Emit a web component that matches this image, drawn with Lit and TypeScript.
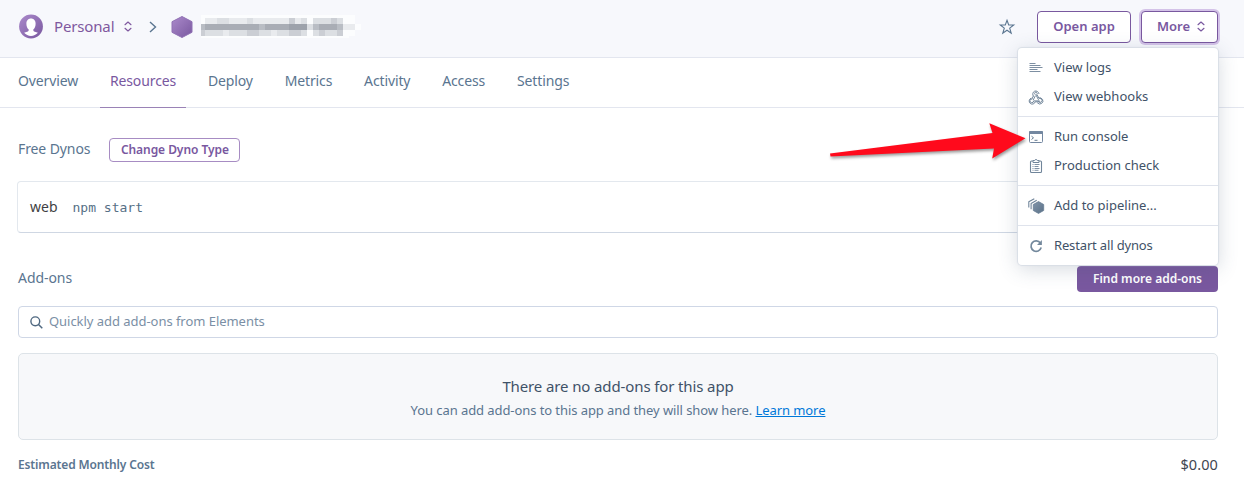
import { LitElement, html, css, svg } from "lit";
import { customElement } from "lit/decorators.js";

const TABS = ["Overview", "Resources", "Deploy", "Metrics", "Activity", "Access", "Settings"];

// Shades of the redacted application name, one string per row of mosaic cells.
const MOSAIC = [
  "111111111111111111111111110",
  "122332223222222423133343110",
  "566666666656666777356665221",
  "433323334433233443134334110",
  "111111111111111111111111100",
];
const ROW_TOPS = [0, 3, 9, 15, 21, 23];
const SHADES = ["none", "#fcfdfe", "#e9ebee", "#dcdfe3", "#cbced4", "#b9bdc4", "#a9adb5", "#9da2ab"];

const updown = svg`<path d="M1 3.700 4 1l3 2.700M1 7.300 4 10l3-2.700" fill="none" stroke="currentColor" stroke-width="1.150" stroke-linejoin="round" stroke-linecap="round"/>`;

const icons = {
  logs: svg`<path d="M1.500 3.500h6M1.500 5.500h11M1.500 7.500h13M1.500 9.500h8M1.500 11.500h11" stroke="#7d8fa2" fill="none"/>`,
  hooks: svg`<g fill="none" stroke="#6d8297" stroke-width=".95" stroke-linejoin="round" stroke-linecap="round"><path d="M5.300 7.100A3.200 3.200 0 1 1 11 4.600M5.300 7.100 3.900 9.900M7.200 7.100 5.300 10.800"/><path d="M6.800 5.200a1.300 1.300 0 1 1 2 .1l2 3.700a3.100 3.100 0 1 1-1.300 5M7.900 5.800l2.400 4.700a2 2 0 1 1 .2 2.200"/><path d="M2.900 9.200a3.100 3.100 0 1 0 4.300 3.600h4.300M3.900 9.900a1.900 1.900 0 1 0 1.800 2h5.500"/></g>`,
  console: svg`<path d="M2 2h12a1 1 0 0 1 1 1v2H1V3a1 1 0 0 1 1-1z" fill="#7387a0"/><rect x="1.500" y="2.500" width="13" height="11" rx="1" fill="none" stroke="#7387a0"/><path d="m3.500 7.200 2 1.600-2 1.700M6.500 11.300h3" fill="none" stroke="#647a90"/>`,
  check: svg`<rect x="2.500" y="3" width="11" height="11.500" rx="1" fill="none" stroke="#70859a" stroke-width="1.100"/><path d="M5 2.500h1.600a1.500 1.500 0 0 1 2.800 0H11v2H5z" fill="#fff" stroke="#70859a"/><path d="M4.500 6.500h1M4.500 8.500h1M4.500 10.500h1M4.500 12.300h1M6.500 6.500h5M6.500 8.500h4M6.500 10.500h5M6.500 12.300h4" stroke="#70859a" stroke-width=".9"/>`,
  pipeline: svg`<path d="m10.500 3.600 5.200 2.900v6l-5.200 2.900-5.200-2.900v-6z" fill="url(#slate)" stroke="#687e94" stroke-width=".8" stroke-linejoin="round"/><path d="M3.100 11.300V5.400l5.600-3.100M.8 9.500V3.800L6.300.8" fill="none" stroke="#70859a" stroke-width="1.100" stroke-linejoin="round"/><defs><linearGradient id="slate" x2="1" y2="1"><stop stop-color="#8295aa"/><stop offset="1" stop-color="#5b7188"/></linearGradient></defs>`,
  restart: svg`<path d="M12.400 5A5.200 5.200 0 1 0 13.200 9.600" fill="none" stroke="#73889c" stroke-width="1.700"/><path d="M13.900 2v5H9z" fill="#73889c"/>`,
};
type Icon = keyof typeof icons;

const MENU: { icon: Icon; label: string }[][] = [
  [
    { icon: "logs", label: "View logs" },
    { icon: "hooks", label: "View webhooks" },
  ],
  [
    { icon: "console", label: "Run console" },
    { icon: "check", label: "Production check" },
  ],
  [{ icon: "pipeline", label: "Add to pipeline..." }],
  [{ icon: "restart", label: "Restart all dynos" }],
];

@customElement("app-root")
export class AppRoot extends LitElement {
  static styles = css`
    :host { display: block; position: relative; height: 502px; overflow: hidden; background: #fff; color: #5a7590; font: 14px/20px "Noto Sans", "Open Sans", sans-serif; }
    * { box-sizing: border-box; }
    svg { display: block; flex: none; overflow: visible; }
    .header { height: 58px; padding: 0 26px 4px 19px; display: flex; align-items: center; background: #f7f8fc; border-bottom: 1px solid #e3e6ef; color: #7f589f; }
    .owner { width: 60px; margin: 0 10px 2px 11px; font-size: 15px; letter-spacing: -.15px; white-space: nowrap; }
    .chev { margin: 0 14px 0 17px; color: #5a7590; }
    .name { margin-left: 6px; }
    .star { margin-left: auto; margin-right: 22.500px; }
    .btn { height: 32px; padding-bottom: 2px; display: flex; align-items: center; justify-content: center; border: 1px solid #79589f; border-radius: 4px; background: #fff; color: #79589f; font-weight: 600; font-size: 13px; }
    .open { width: 94px; margin-right: 10px; }
    .more { width: 77px; padding-left: 3px; gap: 7px; box-shadow: 0 0 0 2px #d4c3e8; }
    .more svg { margin-top: 2px; }
    .tabs { height: 50px; padding: 0 8px; display: flex; gap: 11.75px; border-bottom: 1px solid #e3e6ef; letter-spacing: -.115px; }
    .tab { height: 50px; padding: 13px 10px 0; }
    .on { color: #79589f; border-bottom: 1px solid #9a82b6; }
    .main { padding: 30px 26px 0 18px; }
    .row { display: flex; align-items: center; }
    .free { padding-bottom: 2px; letter-spacing: -.1px; }
    .type { width: 131px; height: 24px; padding-bottom: 1px; margin-left: 19px; font-size: 12px; letter-spacing: -.06px; border-color: #a78cc3; }
    .dyno { height: 52px; margin: 19px 0 0 -1px; padding: 0 12px; display: flex; align-items: center; border: 1px solid #e3e8ee; border-bottom-color: #cfd7e3; border-radius: 4px; color: #3f3f44; }
    .cmd { margin-left: 15px; padding-top: 1px; font: 13px/20px "DejaVu Sans Mono", monospace; color: #567086; }
    .addons { height: 28px; margin-top: 32px; justify-content: space-between; }
    .addons span { padding-bottom: 2px; letter-spacing: -.06px; }
    .find { width: 141px; height: 26px; border-radius: 4px; background: #79589f; color: #fff; font-weight: 600; font-size: 12px; line-height: 26px; text-align: center; }
    .search { height: 32px; margin-top: 13px; padding: 0 11px; display: flex; align-items: center; gap: 6px; border: 1px solid #cfd7e6; border-radius: 4px; font-size: 13px; color: #7b8fa5; }
    .search span { padding-bottom: 2px; letter-spacing: -.04px; }
    .empty { height: 87px; margin-top: 15px; padding-top: 21px; background: #f7f8fa; border: 1px solid #dde3e8; border-radius: 5px; text-align: center; font-size: 13px; }
    .title { font-size: 15px; color: #3f5268; line-height: 22px; letter-spacing: -.12px; }
    .sub { margin-top: 3px; line-height: 20px; letter-spacing: -.075px; }
    .link { color: #0078d9; text-decoration: underline; }
    .cost { margin-top: 14px; justify-content: space-between; font-weight: 600; font-size: 12px; letter-spacing: -.14px; }
    .price { padding-bottom: 2px; margin-bottom: -1px; font-weight: 400; font-size: 14.500px; letter-spacing: .1px; color: #3f4650; }
    .menu { position: absolute; left: 1018px; top: 48px; width: 200px; height: 217px; background: #fff; border-radius: 4px; box-shadow: 0 0 1px 1px #d9dee6, 0 4px 20px rgba(60, 80, 110, .22); color: #3f5268; font-size: 13px; }
    .group { padding: 5px 0; border-bottom: 1px solid #dfe3ec; }
    .group:last-child { border: 0; letter-spacing: -.15px; }
    .item { height: 29px; padding-left: 10px; display: flex; align-items: center; gap: 10px; }
    .item span { padding-bottom: 2px; }
    .arrow { position: absolute; left: 820px; top: 110px; filter: drop-shadow(1px 2px 1.5px rgba(0, 0, 0, .4)); }
  `;

  render() {
    return html`
      <div class="header">
        <svg width="24" height="25" viewBox="0 0 25 25"><defs><linearGradient id="v" x2="1" y2="1"><stop stop-color="#ab8acb"/><stop offset="1" stop-color="#79589f"/></linearGradient></defs><circle cx="12.5" cy="12.5" r="12.4" fill="url(#v)"/><path d="M12.5 4.2c-3 0-4.8 2.3-4.8 5.4 0 2.600.8 4.700 2.400 6 .2 1.400-.4 2-1.600 2.400l-3.200 1.100c2 2.100 4.400 3.300 7.200 3.300s5.200-1.200 7.200-3.300l-3.200-1.100c-1.200-.4-1.800-1-1.600-2.400 1.600-1.300 2.400-3.400 2.400-6 0-3.100-1.800-5.400-4.800-5.400z" fill="#fff"/></svg>
        <span class="owner">Personal</span>
        <svg width="8" height="11" viewBox="0 0 8 11">${updown}</svg>
        <svg class="chev" width="8" height="12" viewBox="0 0 8 12"><path d="m1 1 5.500 5L1 11" fill="none" stroke="currentColor" stroke-width="1.400"/></svg>
        <svg width="22" height="24" viewBox="0 0 22 24"><path d="m11 1.500 10 5.200v10.600L11 22.500 1 17.300V6.700z" fill="url(#v)" stroke="#9070b4" stroke-width="1" stroke-linejoin="round"/></svg>
        <svg class="name" width="162" height="23" shape-rendering="crispEdges">${MOSAIC.map((r, y) => [...r].map((c, x) => svg`<rect x=${x ? x * 6 : 2} y=${ROW_TOPS[y]} width=${x ? 6 : 4} height=${ROW_TOPS[y + 1] - ROW_TOPS[y]} fill=${SHADES[+c]}/>`))}</svg>
        <svg class="star" width="16" height="16" viewBox="0 0 16 16"><path d="m8 1.300 1.700 4.700h5l-4 3.100 1.500 5L8 11.200l-4.200 2.900 1.500-5-4-3.100h5z" fill="none" stroke="#5a7590" stroke-width="1.100"/></svg>
        <div class="btn open">Open app</div>
        <div class="btn more">More <svg width="8" height="11" viewBox="0 0 8 11">${updown}</svg></div>
      </div>
      <div class="tabs">${TABS.map((t) => html`<div class="tab ${t === "Resources" ? "on" : ""}">${t}</div>`)}</div>
      <div class="main">
        <div class="row"><span class="free">Free Dynos</span><div class="btn type">Change Dyno Type</div></div>
        <div class="dyno"><span>web</span><span class="cmd">npm start</span></div>
        <div class="row addons"><span>Add-ons</span><div class="find">Find more add-ons</div></div>
        <div class="search"><svg width="13" height="13" viewBox="0 0 13 13"><circle cx="5.300" cy="5.300" r="4.400" fill="none" stroke="#4f6880" stroke-width="1.400"/><path d="m8.500 8.500 3.800 3.800" stroke="#4f6880" stroke-width="1.500"/></svg><span>Quickly add add-ons from Elements</span></div>
        <div class="empty">
          <div class="title">There are no add-ons for this app</div>
          <div class="sub">You can add add-ons to this app and they will show here. <span class="link">Learn more</span></div>
        </div>
        <div class="row cost"><span>Estimated Monthly Cost</span><span class="price">$0.00</span></div>
      </div>
      <div class="menu">${MENU.map((g) => html`<div class="group">${g.map((i) => html`<div class="item"><svg width="16" height="16" viewBox="0 0 16 16">${icons[i.icon]}</svg><span>${i.label}</span></div>`)}</div>`)}</div>
      <svg class="arrow" width="220" height="60" viewBox="0 0 220 60"><path d="M10 43.500 172.500 23 169.300 13.300 205.500 28.200 172.200 48.500 174 38.500 10.500 46.500z" fill="#ff0a1c"/></svg>
    `;
  }
}
